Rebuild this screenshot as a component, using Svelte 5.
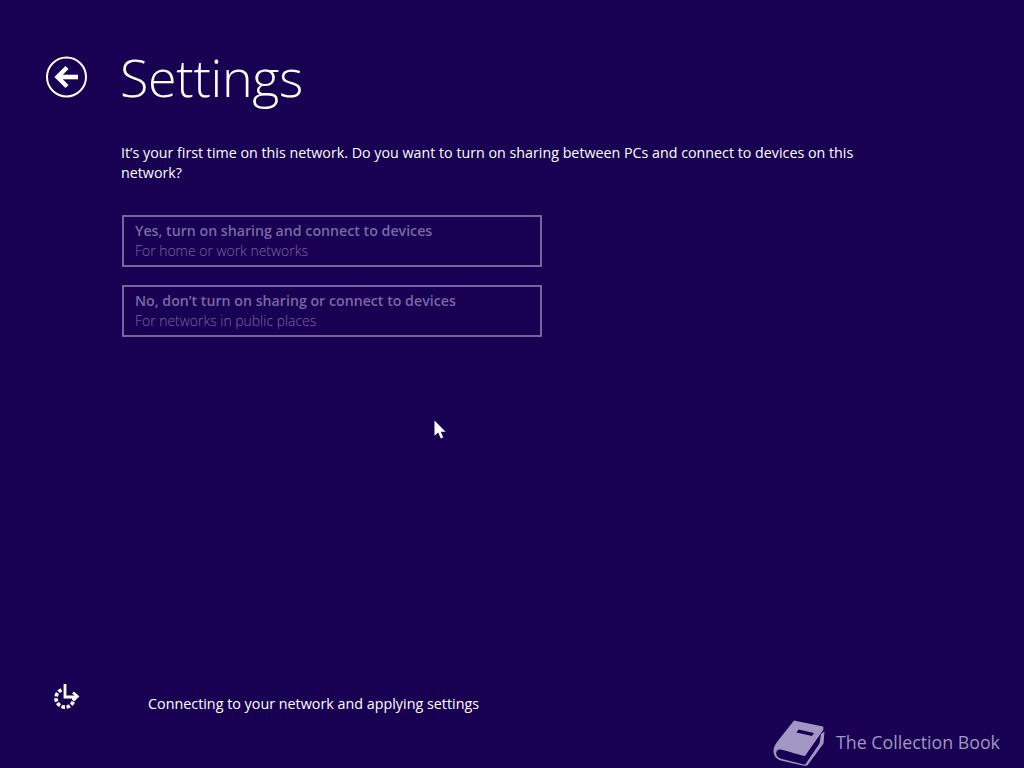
<script>
  const options = [
    { title: 'Yes, turn on sharing and connect to devices', sub: 'For home or work networks' },
    { title: 'No, don’t turn on sharing or connect to devices', sub: 'For networks in public places' }
  ];
</script>

<div class="page">
  <header>
    <svg class="back" width="42" height="42" viewBox="0 0 42 42" aria-hidden="true">
      <circle cx="20.5" cy="21" r="19.5" fill="none" stroke="#fff" stroke-width="2" />
      <path d="M12 21H32" stroke="#fff" stroke-width="4.6" fill="none" />
      <path d="M21 11.5L11.5 21L21 30.5" stroke="#fff" stroke-width="4.4" fill="none" />
    </svg>
    <h1>Settings</h1>
  </header>

  <main>
    <p class="question">It’s your first time on this network. Do you want to turn on sharing between PCs and connect to devices on this network?</p>
    <div class="options">
      {#each options as opt}
        <div class="option">
          <div class="opt-title">{opt.title}</div>
          <div class="opt-sub">{opt.sub}</div>
        </div>
      {/each}
    </div>
  </main>

  <footer>
    <svg class="spinner" width="28" height="28" viewBox="0 0 28 28" aria-hidden="true">
      <path d="M9.5 6.8A9 9 0 1 0 22 15" fill="none" stroke="#fff" stroke-width="3.6" stroke-dasharray="3.6 1.6" />
      <path d="M13 1V14H25" fill="none" stroke="#fff" stroke-width="2.8" />
      <path d="M21 9.5L25.5 13.5L21 17.5" fill="none" stroke="#fff" stroke-width="2.6" />
    </svg>
    <span class="status">Connecting to your network and applying settings</span>
  </footer>

  <svg class="cursor" width="12" height="20" viewBox="0 0 12 20" aria-hidden="true">
    <path d="M0.5 0.5V15.8L4.2 12.6L6.8 18.5L9.2 17.5L6.8 11.8H11.6Z" fill="#fff" />
  </svg>

  <div class="watermark">
    <svg width="54" height="48" viewBox="0 0 54 48" aria-hidden="true">
      <path d="M21 2.5L50 8.5C50.8 10 50.5 11.5 49.5 13L32 38C28 37.5 14 33 8 31.5C4 31 2.5 34 3.5 37C4.5 39.5 7 40.5 10 41.3L32 46.8L46.5 25.5L48 16L51.5 13.5L50.5 25.5L34.5 47.3C33 48 31.5 48 30 47.6L8 42.6C3 41 0.5 37.5 0.5 33C0.5 29.5 2 27 4 24Z" fill="#a197c2" />
      <path d="M25.5 11.5L41 15L39 18L23.5 14.6Z" fill="#180052" />
    </svg>
    <span>The Collection Book</span>
  </div>
</div>

<style>
  :global(body) {
    margin: 0;
    background: #180052;
  }

  .page {
    position: relative;
    box-sizing: border-box;
    width: 1024px;
    height: 768px;
    overflow: hidden;
    display: flex;
    flex-direction: column;
    background: #180052;
    color: #fff;
    font-family: "Open Sans", "Noto Sans", sans-serif;
  }

  header {
    display: flex;
    align-items: center;
    gap: 32px;
    height: 42px;
    margin-top: 56px;
    padding-left: 46px;
  }

  .back {
    flex: none;
  }

  h1 {
    margin: 0;
    font-size: 52px;
    font-weight: 300;
    line-height: 42px;
    letter-spacing: -0.3px;
  }

  main {
    flex: 1;
    padding: 45px 0 0 121px;
  }

  .question {
    width: 750px;
    margin: 0;
    font-size: 14.27px;
    line-height: 20px;
  }

  .options {
    display: flex;
    flex-direction: column;
    gap: 18px;
    margin-top: 32px;
    margin-left: 1px;
  }

  .option {
    box-sizing: border-box;
    width: 420px;
    height: 52px;
    padding: 4px 11px;
    border: 2px solid #75649f;
    color: #7a68a6;
  }

  .opt-title {
    font-size: 14.2px;
    font-weight: 600;
    line-height: 20px;
  }

  .opt-sub {
    font-size: 13.95px;
    line-height: 20px;
    font-weight: 300;
  }

  footer {
    display: flex;
    align-items: flex-start;
    height: 30px;
    margin-bottom: 55px;
    padding-left: 52px;
    gap: 68px;
  }

  .status {
    font-size: 14.33px;
    line-height: 20px;
    margin-top: 11px;
  }

  .cursor {
    position: absolute;
    left: 434px;
    top: 420px;
  }

  .watermark {
    position: absolute;
    left: 773px;
    top: 718px;
    display: flex;
    align-items: center;
    gap: 9px;
    color: #a197c2;
    font-size: 17.8px;
  }

  .watermark span {
    margin-top: -1px;
    white-space: nowrap;
  }
</style>
